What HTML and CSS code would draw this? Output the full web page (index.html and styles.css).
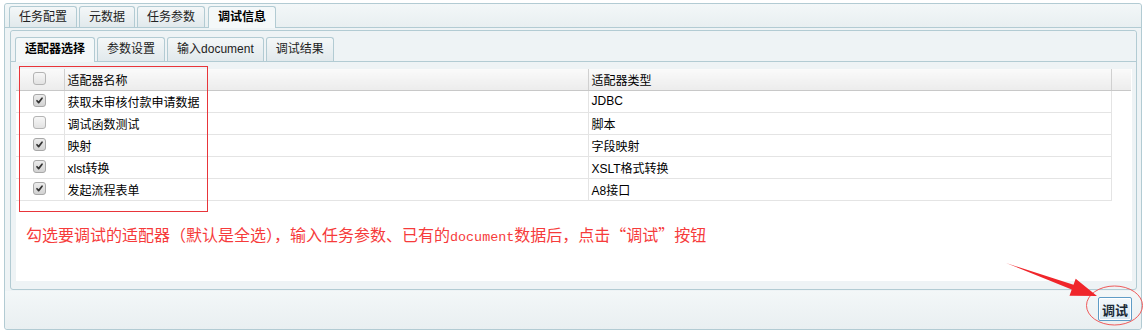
FILE: index.html
```html
<!DOCTYPE html>
<html lang="zh-CN">
<head>
  <meta charset="UTF-8">
  <title>调试信息</title>
  <link rel="stylesheet" href="styles.css">
</head>
<body>
  <div class="panel">
    <ul class="tabs">
      <li>任务配置</li>
      <li>元数据</li>
      <li>任务参数</li>
      <li class="active">调试信息</li>
    </ul>

    <div class="panel-body">
      <div class="sub">
        <ul class="tabs sub-tabs">
          <li class="active">适配器选择</li>
          <li>参数设置</li>
          <li>输入document</li>
          <li>调试结果</li>
        </ul>

        <div class="sub-body">
          <div class="grid">
            <table class="grid-table">
              <colgroup>
                <col class="col-cb">
                <col class="col-name">
                <col class="col-type">
                <col class="col-fill">
              </colgroup>
              <thead>
                <tr>
                  <th class="cb-cell"><span class="cb"></span></th>
                  <th>适配器名称</th>
                  <th>适配器类型</th>
                  <th class="fill"></th>
                </tr>
              </thead>
              <tbody>
                <tr>
                  <td class="cb-cell"><span class="cb checked"><svg viewBox="0 0 13 13"><path d="M3.5 6.8l2 2.2 4-5.2" /></svg></span></td>
                  <td>获取未审核付款申请数据</td>
                  <td>JDBC</td>
                  <td class="fill"></td>
                </tr>
                <tr>
                  <td class="cb-cell"><span class="cb"></span></td>
                  <td>调试函数测试</td>
                  <td>脚本</td>
                  <td class="fill"></td>
                </tr>
                <tr>
                  <td class="cb-cell"><span class="cb checked"><svg viewBox="0 0 13 13"><path d="M3.5 6.8l2 2.2 4-5.2" /></svg></span></td>
                  <td>映射</td>
                  <td>字段映射</td>
                  <td class="fill"></td>
                </tr>
                <tr>
                  <td class="cb-cell"><span class="cb checked"><svg viewBox="0 0 13 13"><path d="M3.5 6.8l2 2.2 4-5.2" /></svg></span></td>
                  <td>xlst转换</td>
                  <td>XSLT格式转换</td>
                  <td class="fill"></td>
                </tr>
                <tr>
                  <td class="cb-cell"><span class="cb checked"><svg viewBox="0 0 13 13"><path d="M3.5 6.8l2 2.2 4-5.2" /></svg></span></td>
                  <td>发起流程表单</td>
                  <td>A8接口</td>
                  <td class="fill"></td>
                </tr>
              </tbody>
            </table>

            <p class="note">勾选要调试的适配器（默认是全选），输入任务参数、已有的<span class="mono">document</span>数据后，点击“调试”按钮</p>
          </div>
        </div>
      </div>
    </div>

    <div class="footer">
      <button class="btn">调试</button>
    </div>
  </div>

  <!-- red annotation marks drawn over the screenshot -->
  <svg class="marks" width="1146" height="333" viewBox="0 0 1146 333">
    <rect x="19.5" y="66.5" width="188" height="145" fill="none" stroke="#e8353a" stroke-width="1" />
    <ellipse cx="1114.5" cy="305.5" rx="28" ry="19.5" fill="none" stroke="#ef5a5a" stroke-width="1" />
    <polygon points="1006,263 1073.5,284.8 1075.7,278.7 1097,296 1069.5,295.7 1071.7,289.5" fill="#f0262b" />
  </svg>
</body>
</html>
```

FILE: styles.css
```css
* {
  margin: 0;
  padding: 0;
  box-sizing: border-box;
}

body {
  font-family: "Liberation Sans", "Noto Sans CJK SC", sans-serif;
  font-size: 12px;
  color: #000;
  background: #fff;
  position: relative;
  width: 1146px;
  height: 333px;
  overflow: hidden;
}

.panel {
  margin: 3px 0 0 4px;
  width: 1138px;
  height: 327px;
  border: 1px solid #b2cbd3;
  border-radius: 3px;
  background: #eef3f5;
  display: flex;
  flex-direction: column;
}

/* tab strips */
.tabs {
  list-style: none;
  display: flex;
  align-items: flex-start;
  padding: 2px 0 0 4px;
  height: 24px;
  border-bottom: 1px solid #b2cbd3;
  background: linear-gradient(to bottom, #f3f7f8 0%, #e8eff1 100%);
  border-radius: 3px 3px 0 0;
}

.tabs li {
  height: 21px;
  line-height: 20px;
  padding: 0 9px;
  margin-right: 2px;
  border: 1px solid #b2cbd3;
  border-bottom: none;
  border-radius: 3px 3px 0 0;
  background: linear-gradient(to bottom, #f4f7f8 0%, #e1e9ec 100%);
  color: #222;
  white-space: nowrap;
}

.tabs li.active {
  height: 22px;
  margin-bottom: -1px;
  margin-left: 1px;
  background: #f4f8f9;
  font-weight: bold;
  color: #000;
}

.panel-body {
  padding: 2px 4px 0 5px;
}

.sub {
  border: 1px solid #b2cbd3;
  border-radius: 3px;
  background: #eef3f5;
}

.sub-tabs {
  height: 31px;
  padding: 6px 0 0 4px;
  background: #eef3f5;
}

.sub-tabs li {
  height: 24px;
  line-height: 22px;
}

.sub-tabs li.active {
  height: 25px;
  margin-left: 0;
}

.sub-body {
  height: 227px;
  padding: 7px 4px 7px 5px;
}

/* data grid */
.grid {
  height: 212px;
  background: #fff;
}

.grid-table {
  width: 1115px;
  border-collapse: collapse;
  table-layout: fixed;
}

.col-cb { width: 48px; }
.col-name { width: 524px; }
.col-type { width: 523px; }
.col-fill { width: 20px; }

.grid-table th,
.grid-table td {
  height: 22px;
  padding: 0 0 0 3px;
  text-align: left;
  font-weight: normal;
  white-space: nowrap;
}

.grid-table th {
  height: 21px;
  background: linear-gradient(to bottom, #fafafa 0%, #ececec 100%);
  border-right: 1px solid #d0d0d0;
  border-bottom: 1px solid #c8c8c8;
}

.grid-table td {
  border-right: 1px solid #e4e4e4;
  border-bottom: 1px solid #e4e4e4;
}

.grid-table td.fill {
  border: none;
  background: #fff;
}

.grid-table th.fill {
  border-right: none;
}

.grid-table .cb-cell {
  text-align: center;
  padding: 0;
}

.cb {
  display: inline-block;
  width: 13px;
  height: 13px;
  vertical-align: middle;
  border: 1px solid #b4b4b4;
  border-radius: 3px;
  background: linear-gradient(to bottom, #f7f7f7 0%, #e2e2e2 100%);
  position: relative;
  top: -1px;
}

.cb.checked {
  background: linear-gradient(to bottom, #ececec 0%, #d2d2d2 100%);
  border-color: #a8a8a8;
}

.cb svg {
  display: block;
  width: 11px;
  height: 11px;
}

.cb svg path {
  fill: none;
  stroke: #333;
  stroke-width: 2;
  stroke-linecap: round;
  stroke-linejoin: round;
}

.note {
  margin-top: 23px;
  padding-left: 10px;
  font-family: "Noto Sans CJK SC", sans-serif;
  font-size: 16px;
  line-height: 20px;
  color: #f63b3b;
  white-space: nowrap;
}

.note .mono {
  font-family: "Liberation Mono", monospace;
  font-size: 13.4px;
}

/* bottom button bar */
.footer {
  flex: 1;
  margin-top: 1px;
  padding: 6px 9px 0 0;
  text-align: right;
  background: linear-gradient(to bottom, #f3f7f8 0%, #e9eff1 100%);
  border-radius: 0 0 3px 3px;
}

.btn {
  width: 34px;
  height: 24px;
  font-family: "Noto Sans CJK SC", sans-serif;
  font-size: 13px;
  font-weight: bold;
  color: #1a2a36;
  border: 1px solid #5f9cc6;
  border-radius: 2px;
  box-shadow: inset 0 0 0 1px #fff;
  background: linear-gradient(to bottom, #f4f9fc 0%, #d8e8f3 100%);
  cursor: pointer;
}

.marks {
  position: absolute;
  top: 0;
  left: 0;
  pointer-events: none;
}
```
